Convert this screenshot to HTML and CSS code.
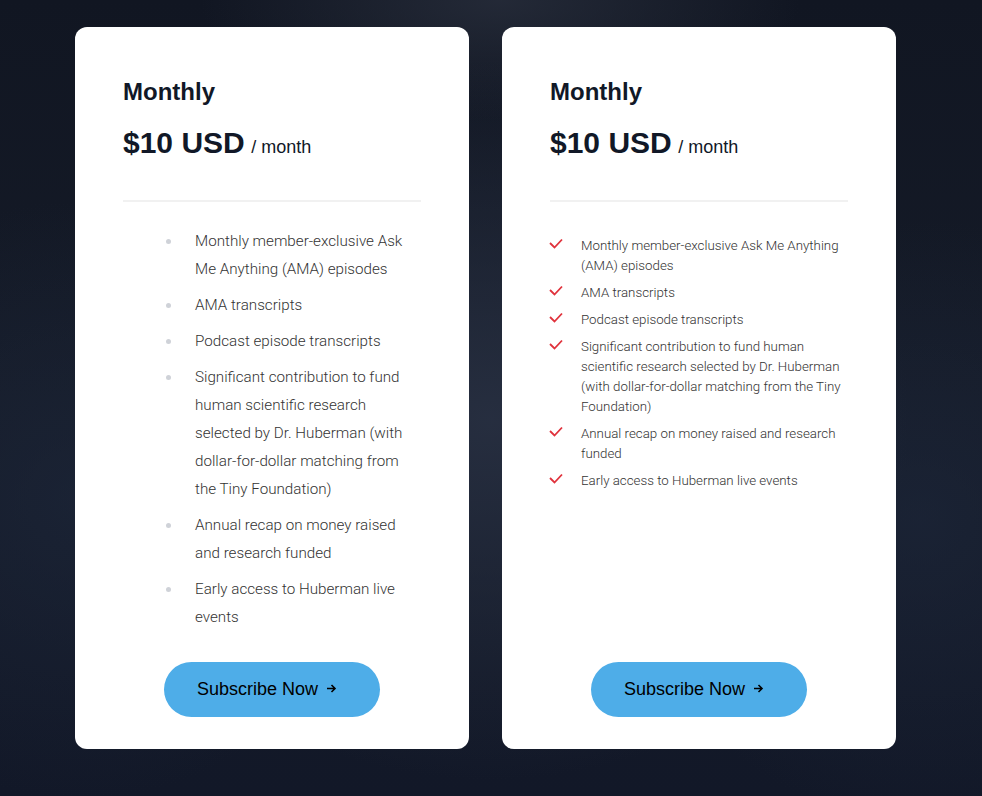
FILE: index.html
```html
<!DOCTYPE html>
<html>
<head>
<meta charset="utf-8">
<link rel="stylesheet" href="styles.css">
</head>
<body>
<div class="plans">
  <div class="card">
    <h2 class="title">Monthly</h2>
    <div class="price"><span class="amount">$10 USD</span> <span class="per">/ month</span></div>
    <hr class="divider">
    <ul class="features dots">
      <li><span class="dot"></span><span>Monthly member-exclusive Ask Me Anything (AMA) episodes</span></li>
      <li><span class="dot"></span><span>AMA transcripts</span></li>
      <li><span class="dot"></span><span>Podcast episode transcripts</span></li>
      <li><span class="dot"></span><span>Significant contribution to fund human scientific research selected by Dr. Huberman (with dollar-for-dollar matching from the Tiny Foundation)</span></li>
      <li><span class="dot"></span><span>Annual recap on money raised and research funded</span></li>
      <li><span class="dot"></span><span>Early access to Huberman live events</span></li>
    </ul>
    <a class="btn" href="#">Subscribe Now <svg class="arrow" width="11" height="11" viewBox="0 0 11 11"><path d="M1 5.5h8M5.5 2l3.5 3.5-3.5 3.5" fill="none" stroke="#000" stroke-width="1.6"/></svg></a>
  </div>
  <div class="card">
    <h2 class="title">Monthly</h2>
    <div class="price"><span class="amount">$10 USD</span> <span class="per">/ month</span></div>
    <hr class="divider">
    <ul class="features checks">
      <li><svg class="check" width="14" height="11" viewBox="0 0 14 11"><path d="M1 5l4.5 4.5L13 1.5" fill="none" stroke="#e0323c" stroke-width="1.8"/></svg><span>Monthly member-exclusive Ask Me Anything (AMA) episodes</span></li>
      <li><svg class="check" width="14" height="11" viewBox="0 0 14 11"><path d="M1 5l4.5 4.5L13 1.5" fill="none" stroke="#e0323c" stroke-width="1.8"/></svg><span>AMA transcripts</span></li>
      <li><svg class="check" width="14" height="11" viewBox="0 0 14 11"><path d="M1 5l4.5 4.5L13 1.5" fill="none" stroke="#e0323c" stroke-width="1.8"/></svg><span>Podcast episode transcripts</span></li>
      <li><svg class="check" width="14" height="11" viewBox="0 0 14 11"><path d="M1 5l4.5 4.5L13 1.5" fill="none" stroke="#e0323c" stroke-width="1.8"/></svg><span>Significant contribution to fund human scientific research selected by Dr. Huberman (with dollar-for-dollar matching from the Tiny Foundation)</span></li>
      <li><svg class="check" width="14" height="11" viewBox="0 0 14 11"><path d="M1 5l4.5 4.5L13 1.5" fill="none" stroke="#e0323c" stroke-width="1.8"/></svg><span>Annual recap on money raised and research funded</span></li>
      <li><svg class="check" width="14" height="11" viewBox="0 0 14 11"><path d="M1 5l4.5 4.5L13 1.5" fill="none" stroke="#e0323c" stroke-width="1.8"/></svg><span>Early access to Huberman live events</span></li>
    </ul>
    <a class="btn" href="#">Subscribe Now <svg class="arrow" width="11" height="11" viewBox="0 0 11 11"><path d="M1 5.5h8M5.5 2l3.5 3.5-3.5 3.5" fill="none" stroke="#000" stroke-width="1.6"/></svg></a>
  </div>
</div>
</body>
</html>
```
FILE: styles.css
```css
html, body {
  margin: 0;
  height: 100%;
}
body {
  background-color: #121826;
  background-image:
    radial-gradient(ellipse 420px 360px at 490px 420px, rgba(40, 48, 66, 0.9), rgba(40, 48, 66, 0) 100%),
    radial-gradient(ellipse 300px 300px at 80px 500px, rgba(30, 40, 60, 0.6), rgba(30, 40, 60, 0) 100%),
    radial-gradient(ellipse 300px 300px at 920px 520px, rgba(30, 40, 60, 0.6), rgba(30, 40, 60, 0) 100%),
    radial-gradient(ellipse 300px 120px at 500px 0px, rgba(40, 46, 60, 0.8), rgba(40, 46, 60, 0) 100%),
    linear-gradient(180deg, #111622 0%, #151b28 50%, #121828 100%);
  font-family: "Liberation Sans", Arial, sans-serif;
  overflow: hidden;
}
.plans {
  display: flex;
  gap: 33px;
  padding: 27px 0 0 75px;
  align-items: stretch;
}
.card {
  width: 394px;
  box-sizing: border-box;
  background: #fff;
  border-radius: 12px;
  padding: 50px 48px 32px;
  display: flex;
  flex-direction: column;
}
.title {
  margin: 0;
  font-size: 24px;
  line-height: 30px;
  font-weight: 700;
  color: #111827;
}
.price {
  margin-top: 18px;
  line-height: 36px;
  color: #111827;
}
.amount {
  font-size: 30px;
  font-weight: 700;
}
.per {
  font-size: 18px;
  margin-left: 2px;
}
.divider {
  border: 0;
  height: 2px;
  background: #f1f1f1;
  margin: 34px 0 0;
}
.features {
  list-style: none;
  margin: 0;
  padding: 0;
  font-family: Roboto, "Liberation Sans", sans-serif;
  font-weight: 300;
  color: #333;
  display: flex;
  flex-direction: column;
  flex: 1 0 auto;
}
.dots {
  margin-top: 25px;
  padding-left: 43px;
  font-size: 15.2px;
  line-height: 28px;
  gap: 8px;
}
.dots li {
  display: flex;
  align-items: flex-start;
}
.dot {
  flex: none;
  width: 5px;
  height: 5px;
  border-radius: 50%;
  background: #cfd2d8;
  margin: 12px 24px 0 0;
}
.checks {
  margin-top: 34px;
  font-size: 13.3px;
  line-height: 20px;
  gap: 7px;
}
.checks li {
  display: flex;
  align-items: flex-start;
}
.check {
  flex: none;
  margin: 2px 18px 0 -1px;
}
.btn {
  margin-top: 31px;
  align-self: center;
  width: 216px;
  height: 55px;
  box-sizing: border-box;
  border-radius: 28px;
  background: #4eade8;
  color: #000;
  text-decoration: none;
  font-size: 18px;
  display: flex;
  align-items: center;
  justify-content: center;
  gap: 8px;
  padding-right: 10px;
}
.arrow {
  margin-top: -3px;
}
```
